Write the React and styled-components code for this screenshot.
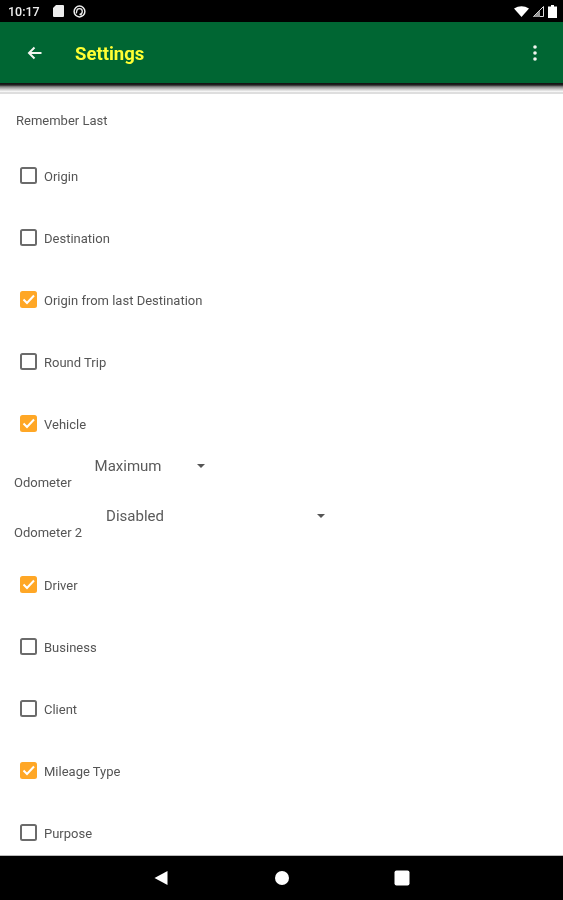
import React from 'react';
import styled, { createGlobalStyle } from 'styled-components';

const GlobalStyle = createGlobalStyle`
  html, body {
    margin: 0;
    padding: 0;
    background: #fff;
    overflow: hidden;
  }
  * {
    box-sizing: border-box;
  }
`;

// the reference is a soft, upscaled capture
const Page = styled.div`
  width: 563px;
  height: 900px;
  display: flex;
  flex-direction: column;
  font-family: Roboto, "Liberation Sans", sans-serif;
  overflow: hidden;
  filter: blur(0.6px);
`;

const StatusBar = styled.div`
  height: 22px;
  flex: none;
  background: #000;
  color: #eee;
  display: flex;
  align-items: center;
  padding: 0 6px 0 8px;
  font-size: 12.5px;
  font-weight: 500;
`;

const StatusIcons = styled.div`
  display: flex;
  align-items: center;
  gap: ${(p) => p.$gap}px;
  margin-left: ${(p) => p.$left};
`;

const Toolbar = styled.header`
  height: 61px;
  flex: none;
  background: #006633;
  display: flex;
  align-items: center;
  padding: 0 26px;
`;

const Title = styled.h1`
  margin: 2px 0 0 31px;
  flex: 1;
  color: #ffff33;
  font-size: 18.5px;
  font-weight: 700;
`;

const Shadow = styled.div`
  height: 9px;
  flex: none;
  background: linear-gradient(#111, #222 22%, #888 42%, #ccc 70%, #fff);
`;

const Divider = styled.div`
  height: 2px;
  flex: none;
  background: #dedede;
`;

const Content = styled.main`
  flex: 1;
  min-height: 0;
  overflow: hidden;
  background: #fff;
  color: #555;
`;

const Heading = styled.div`
  height: 50px;
  padding: 18px 0 0 16px;
  font-size: 13px;
  line-height: 18px;
`;

const CheckRow = styled.label`
  height: 62px;
  display: flex;
  align-items: center;
  padding-left: 20px;
  font-size: 13px;
`;

const Box = styled.span`
  width: 17px;
  height: 17px;
  flex: none;
  margin-right: 7px;
  border-radius: 2.5px;
  border: ${(p) => (p.$checked ? 'none' : '2px solid #6b6b6b')};
  background: ${(p) => (p.$checked ? '#ffa726' : 'transparent')};
  display: flex;
  align-items: center;
  justify-content: center;
`;

const RowText = styled.span`
  padding-top: 2px;
`;

const SelectRow = styled.div`
  height: ${(p) => p.$height}px;
  display: flex;
  align-items: flex-end;
  padding-left: 14px;
`;

const SelectLabel = styled.span`
  font-size: 13px;
  line-height: 16px;
  padding-bottom: ${(p) => p.$bottom}px;
`;

const Select = styled.div`
  width: ${(p) => p.$width}px;
  align-self: flex-start;
  margin-left: ${(p) => p.$left}px;
  margin-top: 2px;
  display: flex;
  align-items: center;
  justify-content: space-between;
  font-size: 15px;
  line-height: 20px;
  color: #5a5a5a;
`;

const Caret = styled.span`
  width: 0;
  height: 0;
  margin-top: -1px;
  border-left: 4.5px solid transparent;
  border-right: 4.5px solid transparent;
  border-top: 4.5px solid #555;
`;

const NavBar = styled.nav`
  height: 45px;
  flex: none;
  background: #000;
  border-top: 1px solid #bbb;
  display: flex;
  align-items: center;
  padding: 0 153px;
  justify-content: space-between;
`;

const BackIcon = () => (
  <svg width="18" height="18" viewBox="0 0 18 18">
    <path d="M15.5 9H3.5M8.5 3.5L3 9l5.5 5.5" fill="none" stroke="#f2f5f0" strokeWidth="2" />
  </svg>
);

const MoreIcon = () => (
  <svg width="4" height="16" viewBox="0 0 4 16">
    <circle cx="2" cy="2" r="1.8" fill="#f2f5f0" />
    <circle cx="2" cy="8" r="1.8" fill="#f2f5f0" />
    <circle cx="2" cy="14" r="1.8" fill="#f2f5f0" />
  </svg>
);

const Tick = () => (
  <svg width="13" height="11" viewBox="0 0 13 11">
    <path d="M1.5 5.5l3.5 3.5 7-7.5" fill="none" stroke="#fff" strokeWidth="2" />
  </svg>
);

const SdIcon = () => (
  <svg width="11" height="12" viewBox="0 0 11 12">
    <path d="M3 0h7a1 1 0 0 1 1 1v10a1 1 0 0 1-1 1H1a1 1 0 0 1-1-1V3z" fill="#eee" />
  </svg>
);

const SyncIcon = () => (
  <svg width="13" height="13" viewBox="0 0 14 14">
    <circle cx="7" cy="7" r="5.8" fill="none" stroke="#eee" strokeWidth="1.6" />
    <path d="M4 7a3 3 0 1 1 3 3M7 10l2.5 1M4 7l-.5 2" fill="none" stroke="#eee" strokeWidth="1.4" />
  </svg>
);

const WifiIcon = () => (
  <svg width="15" height="11" viewBox="0 0 15 11">
    <path d="M0 2.5Q7.5-2 15 2.5L7.5 11z" fill="#fff" />
  </svg>
);

const SignalIcon = () => (
  <svg width="11" height="11" viewBox="0 0 11 11">
    <path d="M10.5.5v10H.5z" fill="none" stroke="#ddd" strokeWidth="1" />
    <path d="M7 4.5V11H0.5z" fill="#999" />
  </svg>
);

const BatteryIcon = () => (
  <svg width="9" height="13" viewBox="0 0 9 13">
    <path d="M3 0h3v1.500h3V13H0V1.500h3z" fill="#fff" />
  </svg>
);

const rows1 = [
  ['Origin', false],
  ['Destination', false],
  ['Origin from last Destination', true],
  ['Round Trip', false],
  ['Vehicle', true],
];

const rows2 = [
  ['Driver', true],
  ['Business', false],
  ['Client', false],
  ['Mileage Type', true],
  ['Purpose', false],
];

function Check({ label, checked }) {
  return (
    <CheckRow>
      <Box $checked={checked}>{checked && <Tick />}</Box>
      <RowText>{label}</RowText>
    </CheckRow>
  );
}

export default function App() {
  return (
    <Page>
      <GlobalStyle />
      <StatusBar>
        10:17
        <StatusIcons $gap={9} $left="13px">
          <SdIcon />
          <SyncIcon />
        </StatusIcons>
        <StatusIcons $gap={4} $left="auto">
          <WifiIcon />
          <SignalIcon />
          <BatteryIcon />
        </StatusIcons>
      </StatusBar>
      <Toolbar>
        <BackIcon />
        <Title>Settings</Title>
        <MoreIcon />
      </Toolbar>
      <Shadow />
      <Divider />
      <Content>
        <Heading>Remember Last</Heading>
        {rows1.map(([label, checked]) => (
          <Check key={label} label={label} checked={checked} />
        ))}
        <SelectRow $height={50}>
          <SelectLabel $bottom={13}>Odometer</SelectLabel>
          <Select $width={110} $left={23}>
            Maximum
            <Caret />
          </Select>
        </SelectRow>
        <SelectRow $height={49}>
          <SelectLabel $bottom={12}>Odometer 2</SelectLabel>
          <Select $width={219} $left={24}>
            Disabled
            <Caret />
          </Select>
        </SelectRow>
        {rows2.map(([label, checked]) => (
          <Check key={label} label={label} checked={checked} />
        ))}
      </Content>
      <NavBar>
        <svg width="16" height="16" viewBox="0 0 16 16">
          <path d="M14.5 1v14L1.5 8z" fill="#fff" />
        </svg>
        <svg width="16" height="16" viewBox="0 0 16 16">
          <circle cx="8" cy="8" r="7" fill="#fff" />
        </svg>
        <svg width="16" height="16" viewBox="0 0 16 16">
          <rect x="0.5" y="0.5" width="15" height="15" rx="2" fill="#fff" />
        </svg>
      </NavBar>
    </Page>
  );
}
